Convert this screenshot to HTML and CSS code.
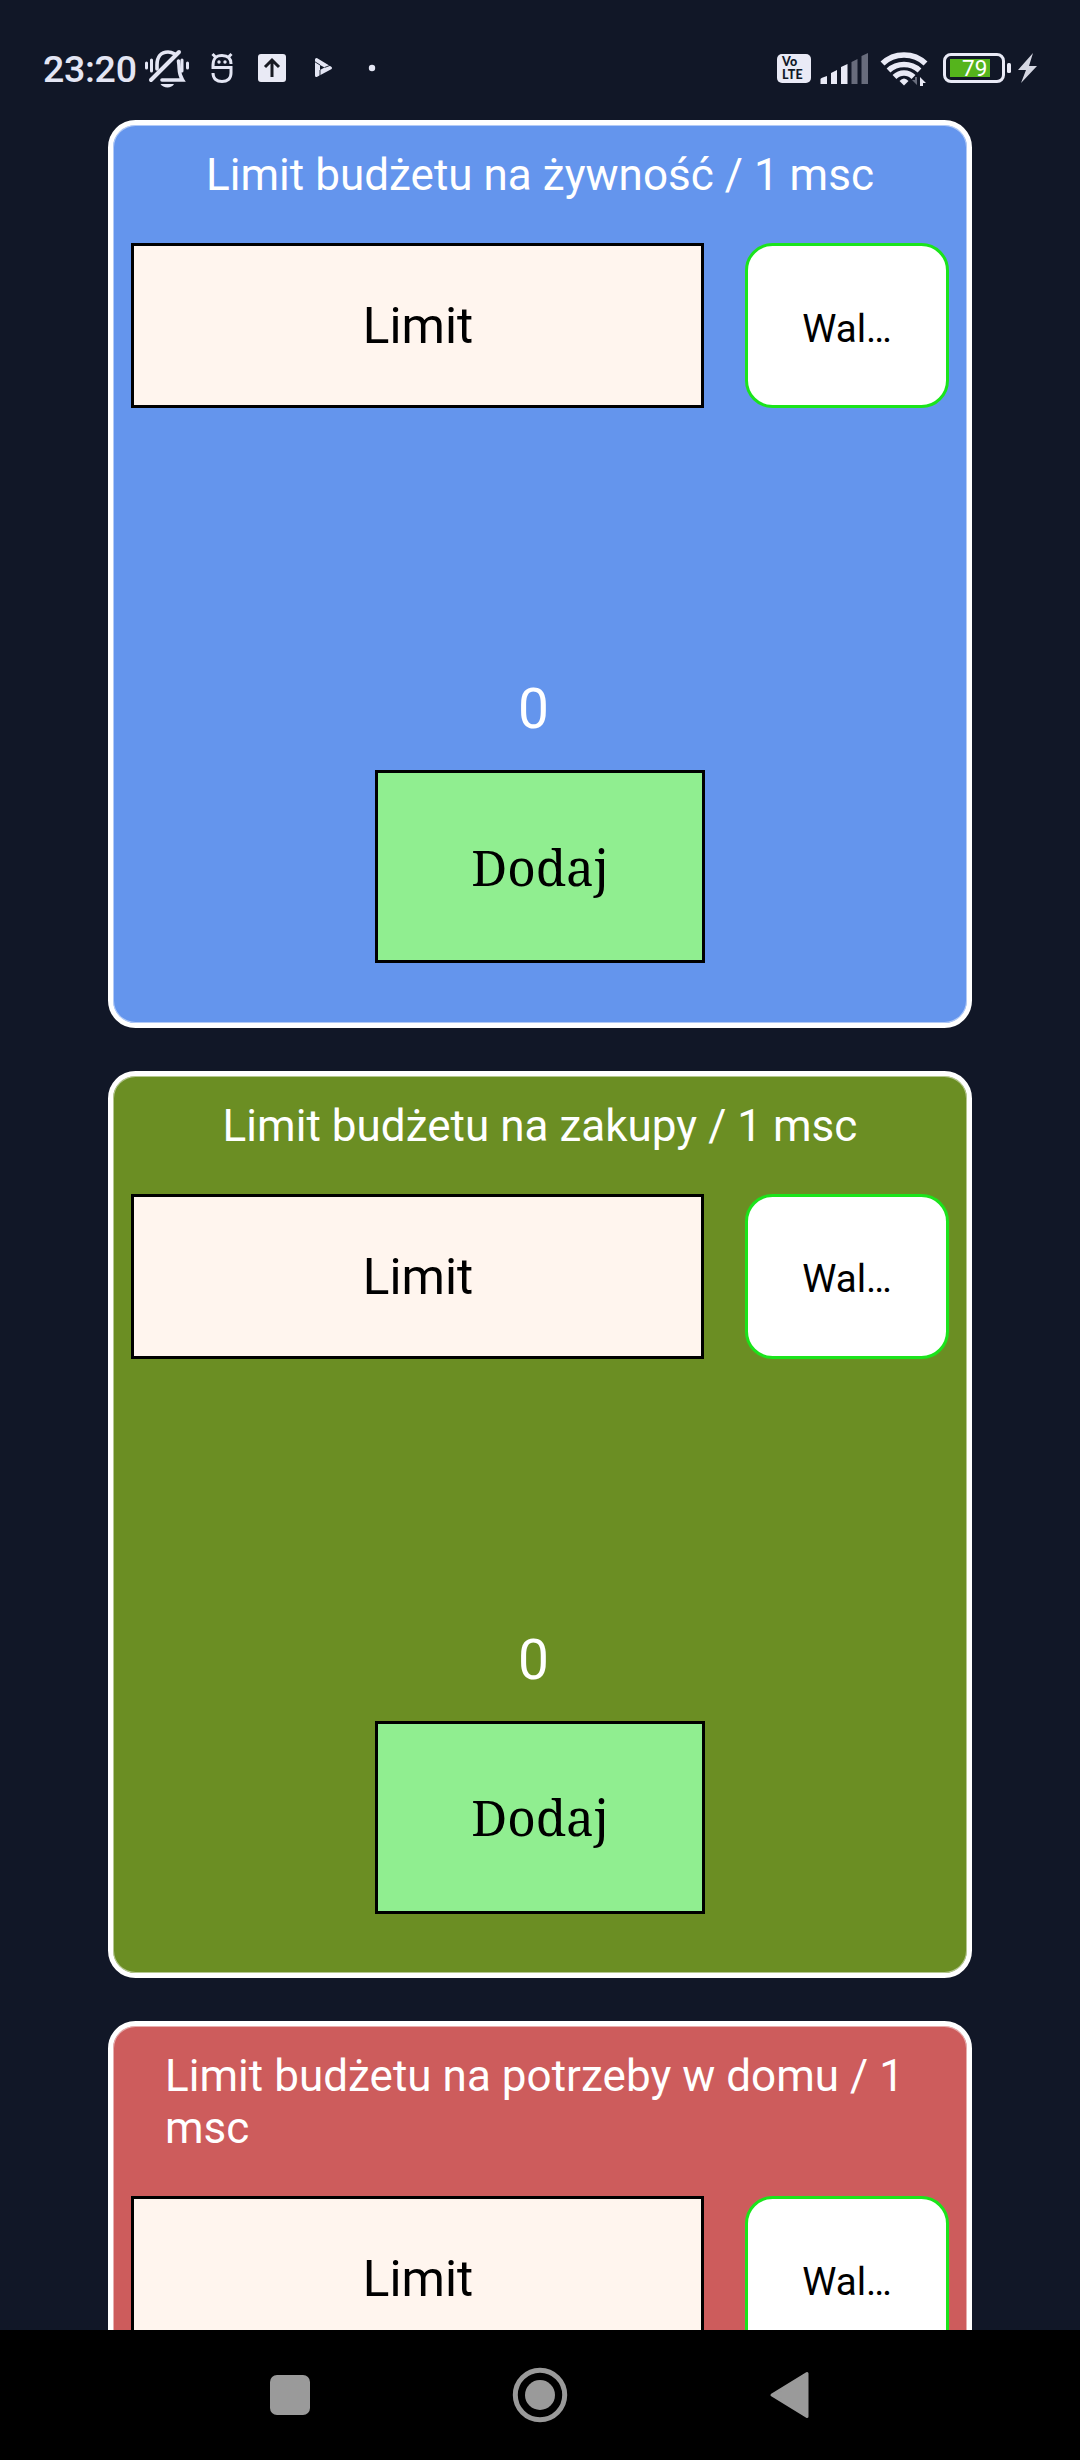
FILE: index.html
```html
<!DOCTYPE html>
<html lang="pl">
<head>
<meta charset="utf-8">
<title>Limit budżetu</title>
<link rel="stylesheet" href="styles.css">
</head>
<body>
<div class="screen">
  <header class="status">
    <span class="clock">23:20</span>
    <svg class="status-left" width="250" height="60" viewBox="140 40 250 60" fill="none" stroke="#e4e6f4" stroke-width="3">
      <g stroke-linecap="round">
        <path d="M146.500 63v5M151.500 60v11M187.500 63v5M182 60v11" stroke-width="3"/>
        <path d="M151 80L179 52" stroke-width="4"/>
        <path d="M157 69V65C157 57 161 52 168 52C171 52 173 53 175 54M178.500 61C180 70 178 73 182.500 80H162" stroke-width="3.600"/>
      </g>
      <path d="M160.500 84H174C172 88.500 163 88.500 160.500 84Z" fill="#e4e6f4" stroke="none"/>
      <path d="M213 66C213 57 217 55.500 222 55.500S231 57 231 64M213 64.500V67.500H231V73C231 79 227 81.500 222 81.500S213 79 213 73M215.500 57L212.500 54M228.500 57L231.500 54"/>
      <circle cx="219" cy="62" r="1.700" fill="#e4e6f4" stroke="none"/><circle cx="225" cy="62" r="1.700" fill="#e4e6f4" stroke="none"/>
      <rect x="258" y="54" width="28" height="28" rx="3" fill="#e9eaf5" stroke="none"/>
      <path d="M272 77V61M265 67L272 60L279 67" stroke="#181a22" stroke-width="3"/>
      <path d="M316.500 59.500L330.500 68L316.500 75.500Z" fill="#e4e6f4" stroke-linejoin="round"/>
      <path d="M320 65L324.500 67.500L320 70Z" fill="#111827" stroke="none"/>
      <path d="M314.500 61.500L320 65M320 70V76M324.500 67.500L331 65" stroke="#111827" stroke-width="0.900"/>
      <circle cx="372" cy="68" r="3.200" fill="#e4e6f4" stroke="none"/>
    </svg>
    <div class="status-right">
      <div class="volte"><span>Vo</span><span>LTE</span></div>
      <svg width="120" height="60" viewBox="814 40 120 60">
        <g fill="#e9eaf6">
          <path d="M820.500 84V79Q820.500 78 827 76V84ZM831 84V73L837 70V84ZM841 84V67L847.500 64V84Z"/>
          <path d="M851.500 84V62L857.500 59V84ZM861.500 84V56L868 53V84Z" fill="#686c7c"/>
        </g>
        <g fill="none" stroke="#e9eaf6" stroke-width="5.500">
          <path d="M882.500 63.500C894 52 914 52 925.500 63.500M888.500 70.500C897 62.500 911 62.500 919.500 70.500M894.500 77C900 71.500 908 71.500 913.500 77"/>
        </g>
        <path d="M899.500 81Q904 76 908.500 81L904 85.500Z" fill="#e9eaf6"/>
        <path d="M917 77V85L912 80H915V77Z" fill="#686c7c"/>
        <path d="M920 86V77L926 83H923V86Z" fill="#e9eaf6"/>
      </svg>
      <div class="battery"><div class="charge">79</div></div>
      <svg width="35" height="60" viewBox="1005 40 35 60"><rect x="1007" y="63" width="4" height="10" rx="1.500" fill="#e9eaf6"/><path d="M1033 53L1018 70H1026L1021 83L1037 66H1029Z" fill="#d5d7e2"/></svg>
    </div>
  </header>

  <main class="list">
    <section class="card food">
      <h2 class="title">Limit budżetu na żywność / 1 msc</h2>
      <div class="fields"><div class="limit">Limit</div><div class="currency">Wal…</div></div>
      <div class="total">0</div>
      <button class="add">Dodaj</button>
    </section>
    <section class="card shopping">
      <h2 class="title">Limit budżetu na zakupy / 1 msc</h2>
      <div class="fields"><div class="limit">Limit</div><div class="currency">Wal…</div></div>
      <div class="total">0</div>
      <button class="add">Dodaj</button>
    </section>
    <section class="card home">
      <h2 class="title">Limit budżetu na potrzeby w domu / 1 msc</h2>
      <div class="fields"><div class="limit">Limit</div><div class="currency">Wal…</div></div>
    </section>
  </main>

  <nav class="navbar">
    <svg width="56" height="56" viewBox="-28 -28 56 56" fill="#9a9a9a"><rect x="-20" y="-20" width="40" height="40" rx="7"/></svg>
    <svg width="56" height="56" viewBox="-28 -28 56 56" fill="#9a9a9a"><circle r="15"/><circle r="24.700" fill="none" stroke="#9a9a9a" stroke-width="5"/></svg>
    <svg width="56" height="56" viewBox="-28 -28 56 56" fill="#9a9a9a"><path d="M-18 0L17 -21.500V21.500Z" stroke="#9a9a9a" stroke-width="3" stroke-linejoin="round"/></svg>
  </nav>
</div>
</body>
</html>
```
FILE: styles.css
```css
* { box-sizing: border-box; }
body { margin: 0; background: #111727; font-family: Roboto, sans-serif; }
.screen { width: 1080px; height: 2460px; display: flex; flex-direction: column; overflow: hidden; }

.status { height: 120px; flex: none; display: flex; align-items: flex-start; padding: 40px 0 0 43px; color: #e4e6f4; }
.status svg { display: block; flex: none; }
.clock { width: 97px; flex: none; font-size: 37.500px; line-height: 59px; letter-spacing: -0.3px; white-space: nowrap; font-weight: 500; }
.status-right { margin-left: auto; display: flex; padding-right: 40px; }
.volte {
  width: 34px; height: 29px; margin: 14px 3px 0 0; padding: 2px 0 0 5px; border-radius: 5px;
  background: #e9eaf6; color: #111827; font: 900 12.500px/12.500px Lato, sans-serif; letter-spacing: 0.3px;
  display: flex; flex-direction: column;
}
.battery { width: 62px; height: 30px; margin: 13px 0 0 9px; padding: 3px 4px; border: 3px solid #e9eaf6; border-radius: 8px; }
.charge { width: 40px; height: 18px; padding-left: 12px; background: #55b41c; color: #fff; font: 400 22.500px/19px Roboto, sans-serif; }

.list { flex: 1; min-height: 0; overflow: hidden; display: flex; flex-direction: column; align-items: center; gap: 43px; }
.card {
  width: 864px; height: 907.500px; flex: none; display: flex; flex-direction: column; align-items: center;
  border: 5px solid #fff; border-radius: 27.500px; box-shadow: inset 0 0 0 1px rgba(255, 255, 255, 0.5); color: #fff;
}
.food { background: #6495ed; }
.shopping { background: #6b8e23; }
.home { background: #cd5c5c; }
.title { margin: 24px 52px 0; font-size: 44px; line-height: 52px; letter-spacing: 0.03px; font-weight: 400; }
.fields { align-self: stretch; display: flex; justify-content: space-between; margin: 42px 18px 0; }
.limit, .currency { height: 165px; display: flex; align-items: center; justify-content: center; color: #000; }
.limit { width: 573px; padding: 1px 0 0 1px; background: #fff5ee; border: 3px solid #000; font-size: 49.500px; }
.currency { width: 204px; background: #fff; border: 3px solid #1be41b; border-radius: 27.500px; font-size: 38.500px; padding-top: 5px; }
.total { margin: 269px 13px 0 0; font-size: 55px; line-height: 64px; }
.add {
  width: 330px; height: 193px; margin-top: 29px; padding: 0; border: 3px solid #000; border-radius: 0;
  background: #90ee90; color: #000; font: 49.500px "Noto Serif", "DejaVu Serif", serif;
}

.navbar { height: 130px; flex: none; background: #000; display: flex; align-items: center; justify-content: center; gap: 194px; }
```
